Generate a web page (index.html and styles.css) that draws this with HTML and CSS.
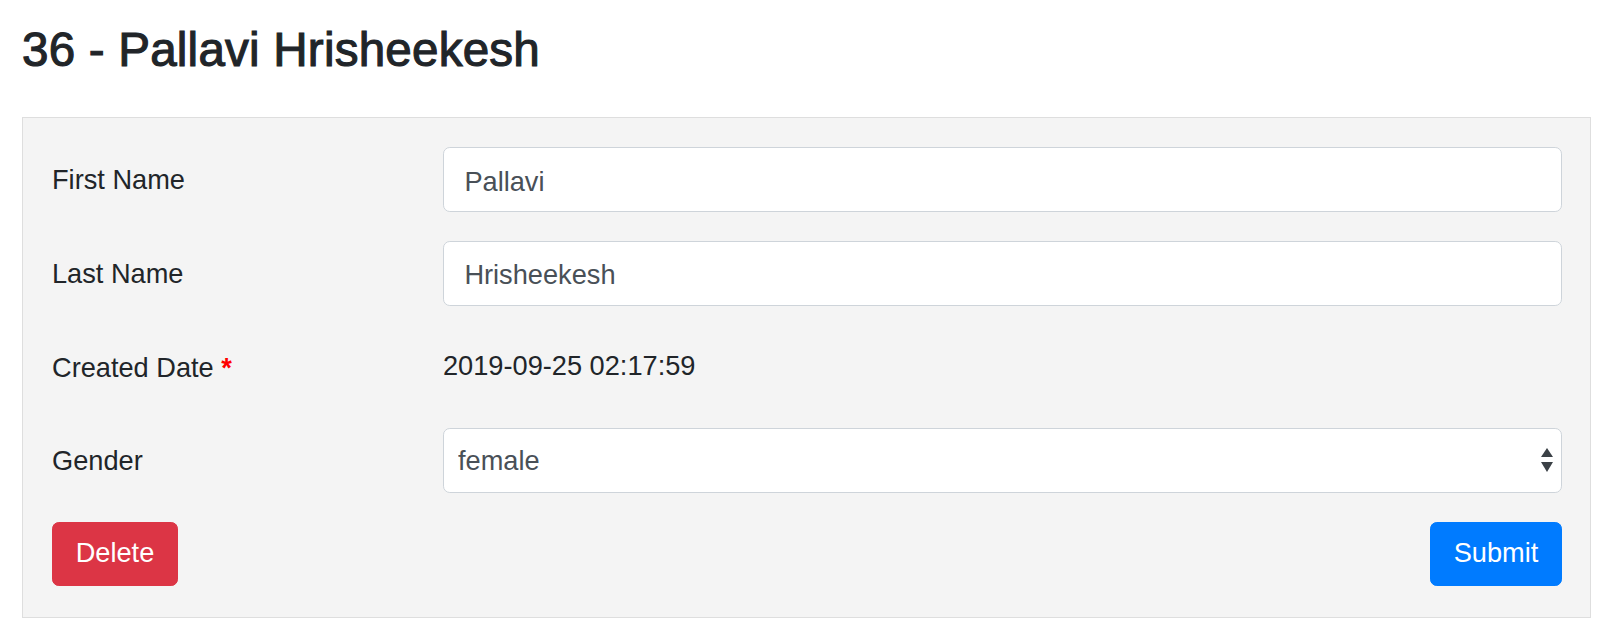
FILE: index.html
```html
<!DOCTYPE html>
<html lang="en">
<head>
<meta charset="utf-8">
<title>36 - Pallavi Hrisheekesh</title>
<link rel="stylesheet" href="styles.css">
</head>
<body>
<div class="page">
  <h3 class="title">36 - Pallavi Hrisheekesh</h3>
  <form class="panel">
    <label class="field-label" for="first">First Name</label>
    <input class="control" id="first" type="text" value="Pallavi">

    <label class="field-label" for="last">Last Name</label>
    <input class="control" id="last" type="text" value="Hrisheekesh">

    <div class="field-label">Created Date <span class="req">*</span></div>
    <div class="plain">2019-09-25 02:17:59</div>

    <label class="field-label" for="gender">Gender</label>
    <div class="select-wrap">
      <select class="control select" id="gender">
        <option>female</option>
        <option>male</option>
      </select>
      <svg class="select-arrows" width="12" height="24" viewBox="0 0 12 24" aria-hidden="true">
        <path d="M6 0 L12 9 L0 9 Z" fill="#3b4146"/>
        <path d="M0 14 L12 14 L6 24 Z" fill="#3b4146"/>
      </svg>
    </div>

    <div class="actions">
      <button type="button" class="btn btn-danger">Delete</button>
      <button type="submit" class="btn btn-primary">Submit</button>
    </div>
  </form>
</div>
</body>
</html>
```

FILE: styles.css
```css
html, body {
  margin: 0;
  padding: 0;
  background: #ffffff;
}

body {
  font-family: "Liberation Sans", Arial, Helvetica, sans-serif;
  font-size: 27.2px;
  line-height: 1.5;
  color: #212529;
}

.page {
  padding: 21px 9px 0 22px;
}

.title {
  margin: 0 0 39px 0;
  font-size: 47.6px;
  font-weight: 500;
  line-height: 57px;
  color: #212529;
  -webkit-text-stroke: 1.1px #212529;
  letter-spacing: 0.2px;
}

.panel {
  display: grid;
  grid-template-columns: 340px 1fr;
  column-gap: 51px;
  row-gap: 28.8px;
  padding: 29px 28px 31px 29px;
  background: #f4f4f4;
  border: 1px solid #dedede;
}

.field-label {
  padding-top: 13px;
  line-height: 40.8px;
  color: #212529;
}

.req {
  color: #ff0000;
  font-weight: 700;
}

.control {
  box-sizing: border-box;
  width: 100%;
  height: 65px;
  margin: 0;
  padding: 12px 20.4px 8px 20.4px;
  font-family: inherit;
  font-size: 27.2px;
  color: #495057;
  background: #ffffff;
  border: 1px solid #ced4da;
  border-radius: 6.8px;
  outline: none;
}

.plain {
  box-sizing: border-box;
  height: 65px;
  padding: 11px 0 0;
  line-height: 40.8px;
  color: #212529;
}

.select-wrap {
  position: relative;
}

.select {
  -webkit-appearance: none;
  appearance: none;
  padding: 8px 40px 8px 14px;
  line-height: normal;
}

.select-arrows {
  position: absolute;
  right: 9px;
  top: 20px;
  pointer-events: none;
}

.actions {
  grid-column: 1 / -1;
  display: flex;
  justify-content: space-between;
  align-items: center;
}

.btn {
  box-sizing: border-box;
  height: 64px;
  padding: 0 22.7px 1px;
  font-family: inherit;
  font-size: 27.2px;
  line-height: 40.8px;
  color: #ffffff;
  border: 1px solid transparent;
  border-radius: 6.8px;
  cursor: pointer;
}

.btn-danger {
  background: #dc3545;
  border-color: #dc3545;
}

.btn-primary {
  background: #007bff;
  border-color: #007bff;
}
```
